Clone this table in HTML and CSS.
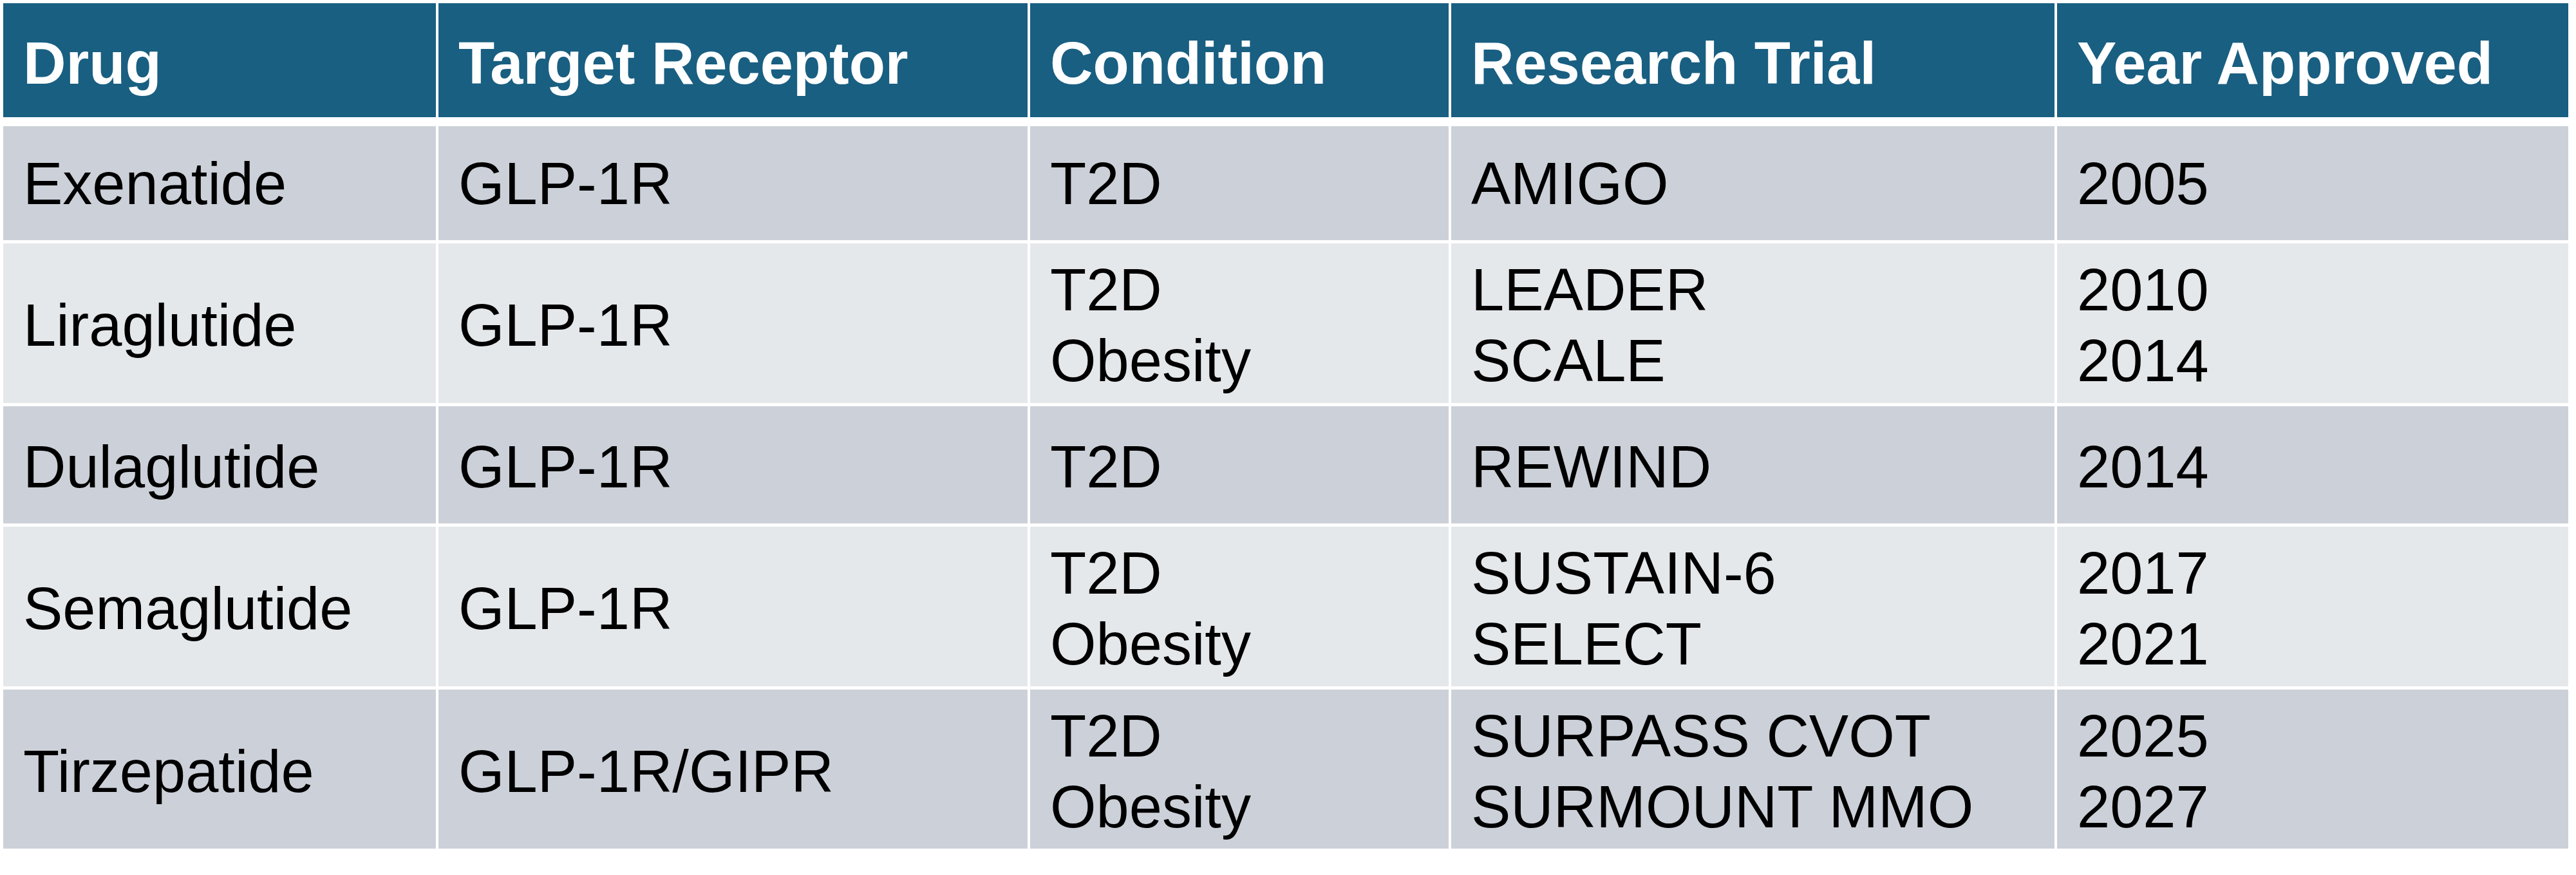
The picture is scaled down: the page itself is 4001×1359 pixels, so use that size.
FILE: index.html
```html
<!DOCTYPE html>
<html lang="en">
<head>
<meta charset="utf-8">
<title>GLP-1 Drugs</title>
<link rel="stylesheet" href="styles.css">
</head>
<body>
<div class="tbl">
  <div class="row head">
    <div class="cell">Drug</div>
    <div class="cell">Target Receptor</div>
    <div class="cell">Condition</div>
    <div class="cell">Research Trial</div>
    <div class="cell">Year Approved</div>
  </div>
  <div class="row dark r1">
    <div class="cell">Exenatide</div>
    <div class="cell">GLP-1R</div>
    <div class="cell">T2D</div>
    <div class="cell">AMIGO</div>
    <div class="cell">2005</div>
  </div>
  <div class="row light r2">
    <div class="cell">Liraglutide</div>
    <div class="cell">GLP-1R</div>
    <div class="cell">T2D<br>Obesity</div>
    <div class="cell">LEADER<br>SCALE</div>
    <div class="cell">2010<br>2014</div>
  </div>
  <div class="row dark r3">
    <div class="cell">Dulaglutide</div>
    <div class="cell">GLP-1R</div>
    <div class="cell">T2D</div>
    <div class="cell">REWIND</div>
    <div class="cell">2014</div>
  </div>
  <div class="row light r4">
    <div class="cell">Semaglutide</div>
    <div class="cell">GLP-1R</div>
    <div class="cell">T2D<br>Obesity</div>
    <div class="cell">SUSTAIN-6<br>SELECT</div>
    <div class="cell">2017<br>2021</div>
  </div>
  <div class="row dark r5">
    <div class="cell">Tirzepatide</div>
    <div class="cell">GLP-1R/GIPR</div>
    <div class="cell">T2D<br>Obesity</div>
    <div class="cell">SURPASS CVOT<br>SURMOUNT MMO</div>
    <div class="cell">2025<br>2027</div>
  </div>
</div>
</body>
</html>
```

FILE: styles.css
```css
html, body {
  margin: 0;
  padding: 0;
  background: #ffffff;
}

body {
  font-family: "Liberation Sans", Arial, sans-serif;
  color: #000000;
}

.tbl {
  display: flex;
  flex-direction: column;
  gap: 5px;
  width: 3984px;
  margin: 5px 0 0 5px;
}

.row {
  display: grid;
  grid-template-columns: 672px 915px 650px 937px 794px;
  column-gap: 4px;
}

.cell {
  display: flex;
  flex-direction: column;
  justify-content: center;
  padding: 6px 20px 0 31px;
  font-size: 92px;
  line-height: 110px;
  white-space: nowrap;
}

.head {
  height: 177px;
  margin-bottom: 9px;
}

.head .cell {
  background: #195f81;
  color: #ffffff;
  font-weight: bold;
  padding-top: 9px;
}

.dark .cell {
  background: #ccd1d9;
}

.light .cell {
  background: #e5e8eb;
}

.r1 { height: 177px; }
.r1 .cell { padding-top: 0; }
.r2 { height: 248px; }
.r3 { height: 182px; }
.r4 { height: 248px; }
.r5 { height: 247px; }
```
